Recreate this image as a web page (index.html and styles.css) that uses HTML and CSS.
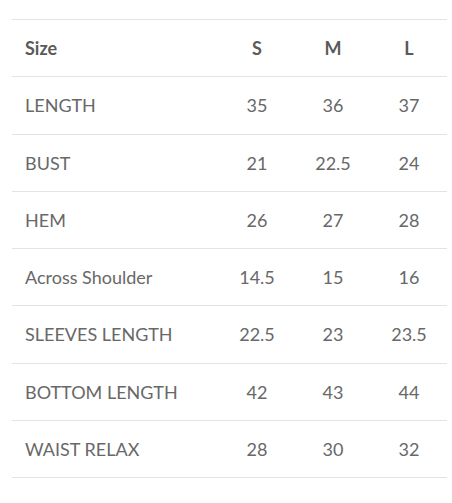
FILE: index.html
```html
<!DOCTYPE html>
<html>
<head>
<meta charset="utf-8">
<link rel="stylesheet" href="styles.css">
</head>
<body>
<div class="wrap">
<table class="size-table">
  <thead>
    <tr><th class="label">Size</th><th>S</th><th>M</th><th>L</th></tr>
  </thead>
  <tbody>
    <tr><td class="label">LENGTH</td><td>35</td><td>36</td><td>37</td></tr>
    <tr><td class="label">BUST</td><td>21</td><td>22.5</td><td>24</td></tr>
    <tr><td class="label">HEM</td><td>26</td><td>27</td><td>28</td></tr>
    <tr><td class="label">Across Shoulder</td><td>14.5</td><td>15</td><td>16</td></tr>
    <tr><td class="label">SLEEVES LENGTH</td><td>22.5</td><td>23</td><td>23.5</td></tr>
    <tr><td class="label">BOTTOM LENGTH</td><td>42</td><td>43</td><td>44</td></tr>
    <tr><td class="label">WAIST RELAX</td><td>28</td><td>30</td><td>32</td></tr>
  </tbody>
</table>
</div>
</body>
</html>
```
FILE: styles.css
```css
html, body {
  margin: 0;
  padding: 0;
  background: #fff;
}
.wrap {
  padding: 19px 5px 0 12px;
}
.size-table {
  width: 435px;
  border-collapse: collapse;
  font-family: "Lato", "Open Sans", sans-serif;
  font-size: 18px;
  color: #686868;
  table-layout: fixed;
}
.size-table th,
.size-table td {
  height: 56.25px;
  padding: 0;
  border-top: 1px solid #e3e3e3;
  border-bottom: 1px solid #e3e3e3;
  text-align: center;
  width: 76px;
}
.size-table .label {
  width: 194px;
  text-align: left;
  padding-left: 13px;
}
.size-table th {
  font-weight: 700;
  color: #5a5a5a;
}
.size-table td {
  font-weight: 400;
}
```
